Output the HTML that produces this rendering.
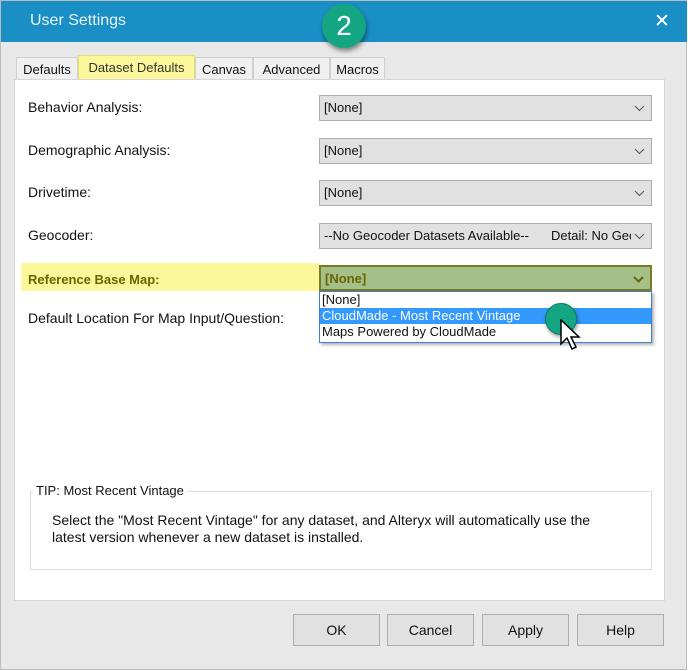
<!DOCTYPE html>
<html><head><style>
*{margin:0;padding:0;box-sizing:border-box}
body{width:688px;height:671px;background:#fff;font-family:"Liberation Sans",sans-serif;font-size:14px;color:#111;position:relative;overflow:hidden}
.win{position:absolute;left:0;top:0;width:687px;height:670px;background:#e8e8e8;border:1px solid #bbb}
.title{position:absolute;left:0;top:0;width:686px;height:41px;background:#1a8fc6;color:#e8f4fb;font-size:16px}
.abs{position:absolute}
.tab{position:absolute;top:56px;height:22px;border:1px solid #d0d0d0;border-bottom:none;background:#f0f0f0;font-size:13px;padding:4px 0 0;text-align:center}
.panel{position:absolute;left:13px;top:78px;width:651px;height:522px;background:#fff;border:1px solid #d6d6d6}
.lbl{position:absolute;left:27px;font-size:14px}
.dd{position:absolute;left:318px;width:333px;height:26px;background:#e1e1e1;border:1px solid #adadad;padding:4px 4px;font-size:13px}
.dd svg{position:absolute;right:6px;top:9px}
.btn{position:absolute;top:613px;height:32px;width:87px;background:#e1e1e1;border:1px solid #adadad;text-align:center;padding-top:7px;font-size:14px}
</style></head><body>
<div class="win">
<div class="title"><span class="abs" style="left:29px;top:11px">User Settings</span>
<span class="abs" style="left:653px;top:9px;font-size:19px;color:#fff">✕</span></div>
<div class="abs" style="left:321px;top:3px;width:44px;height:44px;border-radius:50%;background:#14a583;box-shadow:1px 3px 5px rgba(0,0,0,.45);color:#fff;font-size:28px;text-align:center;line-height:44px">2</div>
<div class="tab" style="left:15px;width:62px">Defaults</div>
<div class="tab" style="left:77px;top:54px;height:25px;width:117px;background:#fcf79a;border-color:#e6e070;color:#333">Dataset Defaults</div>
<div class="tab" style="left:194px;width:58px">Canvas</div>
<div class="tab" style="left:252px;width:77px">Advanced</div>
<div class="tab" style="left:329px;width:55px">Macros</div>
<div class="panel"></div>
<div class="lbl" style="top:98px">Behavior Analysis:</div>
<div class="dd" style="top:94px">[None]<svg width="11" height="7"><path d="M1 1l4.5 4.5L10 1" stroke="#555" fill="none"/></svg></div>
<div class="lbl" style="top:141px">Demographic Analysis:</div>
<div class="dd" style="top:137px">[None]<svg width="11" height="7"><path d="M1 1l4.5 4.5L10 1" stroke="#555" fill="none"/></svg></div>
<div class="lbl" style="top:183px">Drivetime:</div>
<div class="dd" style="top:179px">[None]<svg width="11" height="7"><path d="M1 1l4.5 4.5L10 1" stroke="#555" fill="none"/></svg></div>
<div class="lbl" style="top:226px">Geocoder:</div>
<div class="dd" style="top:222px">--No Geocoder Datasets Available--<span class="abs" style="left:231px;top:4px;width:80px;overflow:hidden;white-space:nowrap">Detail: No Geocoder</span><svg width="11" height="7"><path d="M1 1l4.5 4.5L10 1" stroke="#555" fill="none"/></svg></div>
<div class="abs" style="left:20px;top:262px;width:298px;height:28px;background:#fcf79a"></div>
<div class="lbl" style="top:271px;color:#6b6400;font-weight:bold;font-size:13px">Reference Base Map:</div>
<div class="dd" style="top:264px;background:#a4bf88;border:2px solid #7a7a20;color:#6b6400;font-weight:bold">[None]<svg width="11" height="7"><path d="M1 1l4.5 4.5L10 1" stroke="#6b6400" stroke-width="2" fill="none"/></svg></div>
<div class="lbl" style="top:309px">Default Location For Map Input/Question:</div>
<div class="abs" style="left:318px;top:290px;width:333px;height:52px;background:#fff;border:1px solid #3d7fd0;box-shadow:2px 2px 3px rgba(0,0,0,.3);font-size:13px">
<div style="height:16px;padding-left:2px">[None]</div>
<div style="height:16px;padding-left:2px;background:#3399ff;color:#fff">CloudMade - Most Recent Vintage</div>
<div style="height:16px;padding-left:2px">Maps Powered by CloudMade</div></div>
<div class="abs" style="left:544px;top:302px;width:32px;height:32px;border-radius:50%;background:#14a583;border:1px solid #0f7a62;box-shadow:1px 2px 4px rgba(0,0,0,.4)"></div>
<svg class="abs" style="left:558px;top:318px" width="22" height="34"><path d="M2 1v24l6-6 5 11 4-2-5-10h8z" fill="#fff" stroke="#000" stroke-width="1.5"/></svg>
<div class="abs" style="left:29px;top:490px;width:622px;height:79px;border:1px solid #dcdcdc"></div>
<div class="abs" style="left:32px;top:482px;background:#fff;padding:0 3px;font-size:13px">TIP: Most Recent Vintage</div>
<div class="abs" style="left:51px;top:511px;font-size:14px;line-height:17px">Select the "Most Recent Vintage" for any dataset, and Alteryx will automatically use the<br>latest version whenever a new dataset is installed.</div>
<div class="btn" style="left:292px">OK</div>
<div class="btn" style="left:386px">Cancel</div>
<div class="btn" style="left:481px">Apply</div>
<div class="btn" style="left:576px">Help</div>
</div>
</body></html>
